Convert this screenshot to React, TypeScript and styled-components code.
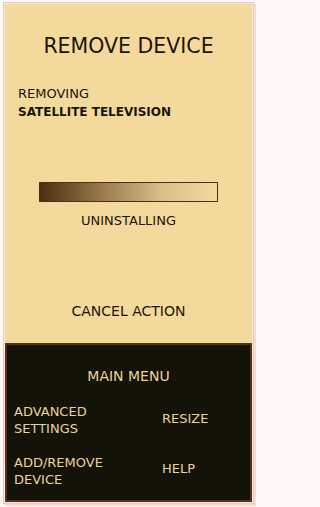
import React from "react";
import styled, { createGlobalStyle } from "styled-components";

const Global = createGlobalStyle`
  html, body { margin: 0; padding: 0; background: #fdf8f6; }
  #root { width: 259px; height: 507px; }
`;

const Frame = styled.div`
  box-sizing: border-box;
  width: 259px;
  height: 507px;
  padding: 4px 7px 5px 5px;
  background: #fdf8f6;
  font-family: "Century Gothic", "URW Gothic", "DejaVu Sans", sans-serif;
`;

const Card = styled.div`
  box-sizing: border-box;
  height: 100%;
  display: flex;
  flex-direction: column;
  background: #f4d99d;
  box-shadow: 0 0 0 1px #f6e6dc, 0 0 0 2px #ecc9bf, 2px 2px 0 2px #f3dcd4;
`;

const Upper = styled.div`
  flex: 1;
  display: flex;
  flex-direction: column;
  color: #1b1508;
`;

const Title = styled.h1`
  margin: 30px 0 0;
  font-size: 20.5px;
  font-weight: normal;
  text-align: center;
`;

const Status = styled.div`
  margin: 26px 0 0 13px;
  font-size: 13px;
  line-height: 19px;
`;

const Device = styled.div`
  font-weight: bold;
  font-size: 12px;
`;

const Bar = styled.div`
  box-sizing: border-box;
  margin: 60px 0 0 34px;
  width: 179px;
  height: 20px;
  border: 1px solid #4e2f14;
  background: linear-gradient(to right, #4c2e10 0%, #9a7a4c 35%, #dcc08a 70%, #f3d99e 100%);
`;

const Caption = styled.div<{ $top: number; $size: number }>`
  margin-top: ${(p) => p.$top}px;
  text-align: center;
  font-size: ${(p) => p.$size}px;
`;

const Menu = styled.div`
  box-sizing: border-box;
  height: 159px;
  background: #141309;
  border: 2px solid #55301a;
  color: #e9d29a;
  display: flex;
  flex-direction: column;
`;

const MenuTitle = styled.div`
  margin-top: 23px;
  text-align: center;
  font-size: 14px;
`;

const MenuGrid = styled.div`
  margin: 19px 0 0 7px;
  display: grid;
  grid-template-columns: 148px 1fr;
  row-gap: 17px;
  align-items: center;
  font-size: 13px;
  line-height: 17px;
`;

const Item = styled.div<{ $lift?: number }>`
  margin-bottom: ${(p) => p.$lift ?? 0}px;
`;

export default function App() {
  return (
    <>
      <Global />
      <Frame>
        <Card>
          <Upper>
            <Title>REMOVE DEVICE</Title>
            <Status>
              REMOVING
              <Device>SATELLITE TELEVISION</Device>
            </Status>
            <Bar />
            <Caption $top={11} $size={13}>UNINSTALLING</Caption>
            <Caption $top={75} $size={14}>CANCEL ACTION</Caption>
          </Upper>
          <Menu>
            <MenuTitle>MAIN MENU</MenuTitle>
            <MenuGrid>
              <Item>ADVANCED<br />SETTINGS</Item>
              <Item $lift={3}>RESIZE</Item>
              <Item>ADD/REMOVE<br />DEVICE</Item>
              <Item $lift={6}>HELP</Item>
            </MenuGrid>
          </Menu>
        </Card>
      </Frame>
    </>
  );
}
